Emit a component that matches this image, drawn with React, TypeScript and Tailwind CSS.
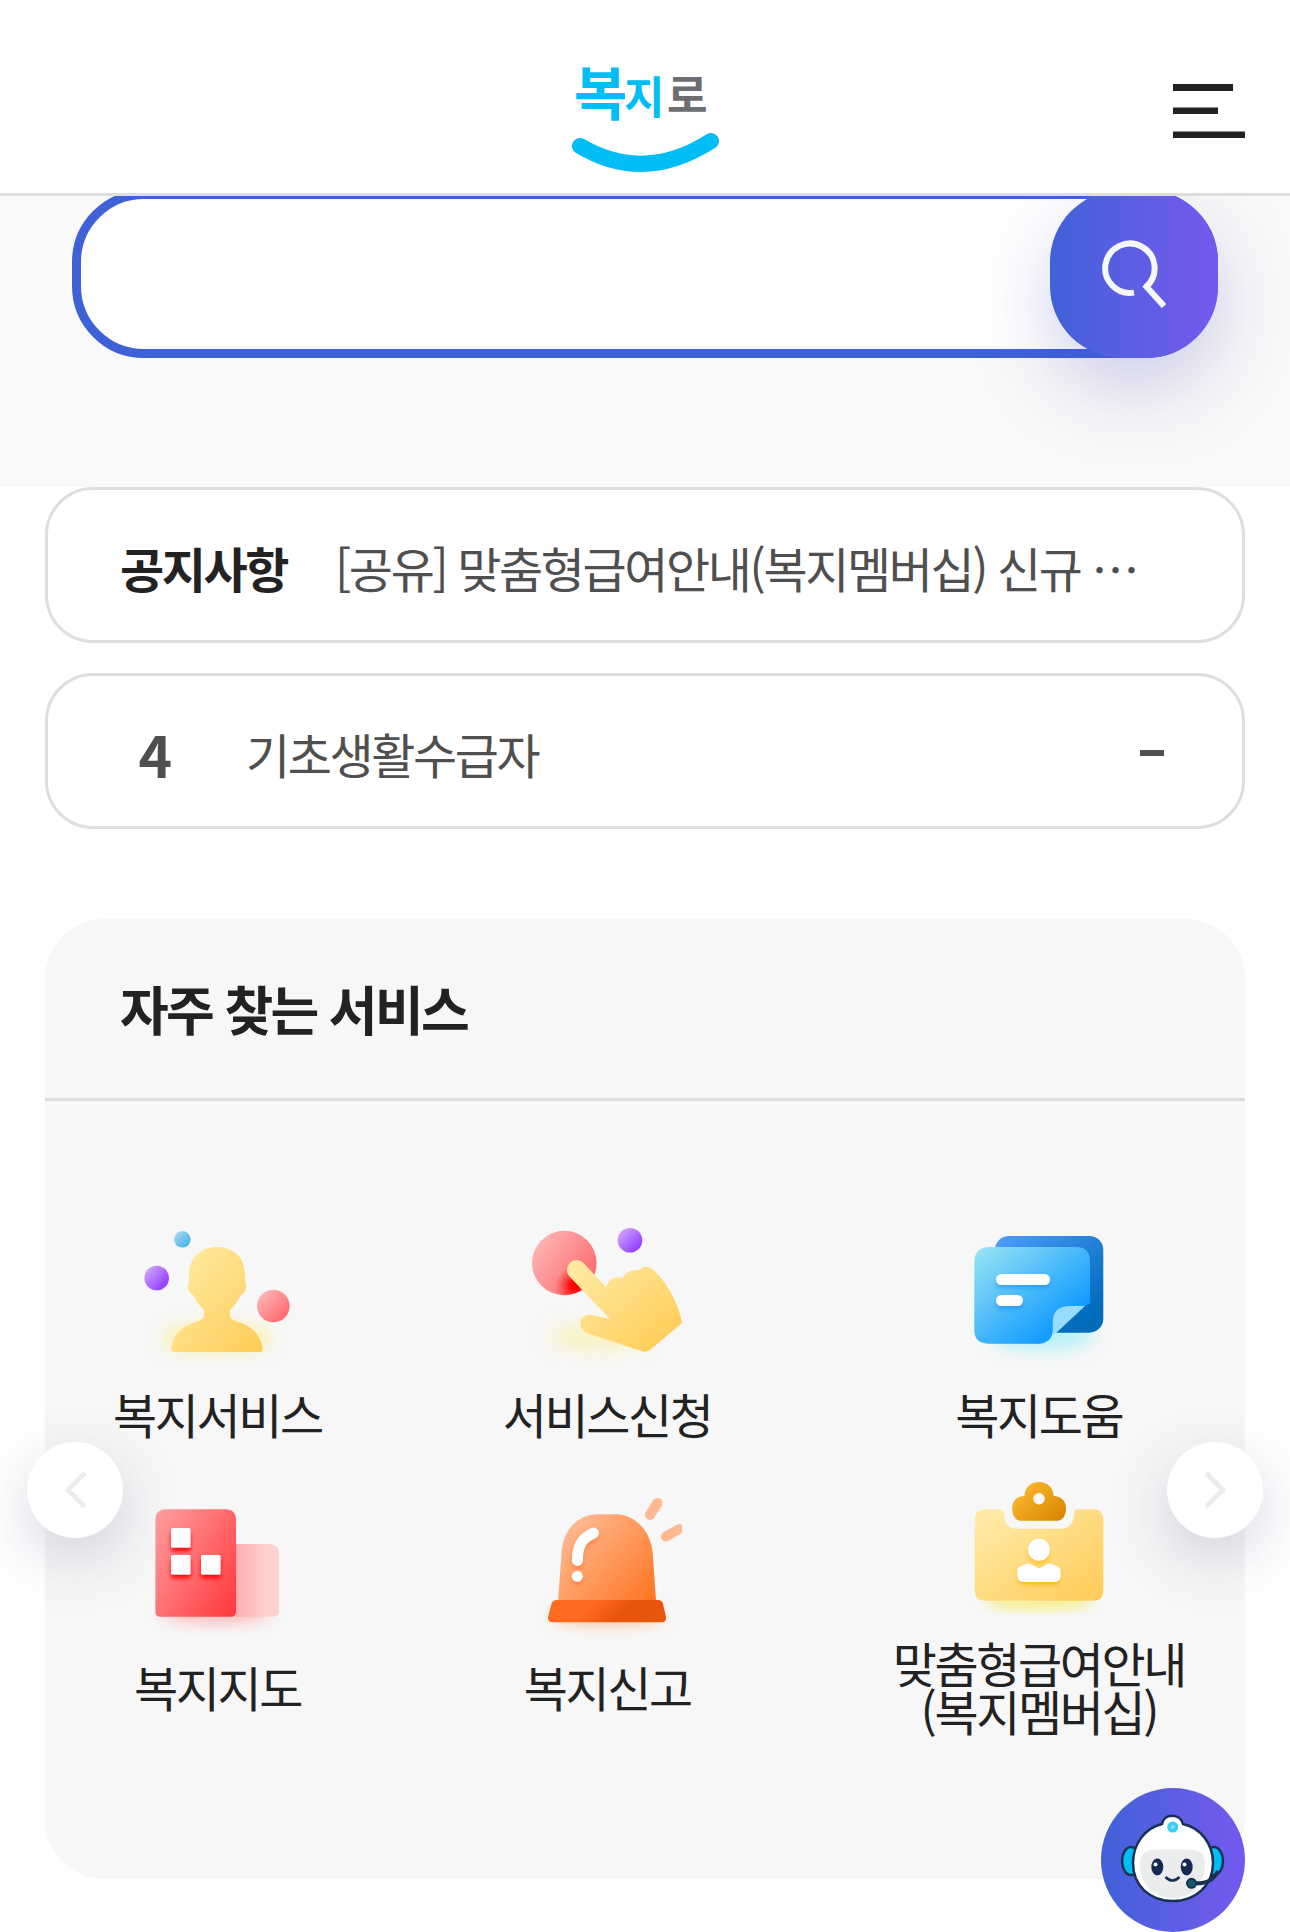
import type { ReactNode } from 'react'

interface Service {
  name: string
  detail?: string
  icon: ReactNode
}

function Logo() {
  return (
    <svg width="147" height="140" viewBox="0 -20 147 140" role="img" aria-label="복지로">
      <g className="font-bold">
        <text x="2" y="63" fontSize="58" fill="#00bdf5">복</text>
        <text x="52" y="62" fontSize="44" fill="#00bdf5">지</text>
        <text x="95" y="60" fontSize="44" fill="#6d6e71">로</text>
      </g>
      <path d="M8 94 Q72 132 139 89" fill="none" stroke="#00bdf5" strokeWidth="16" strokeLinecap="round" />
    </svg>
  )
}

function MenuIcon() {
  return (
    <svg width="72" height="54" viewBox="0 0 72 54" fill="#222" aria-hidden="true">
      <rect width="60" height="7" />
      <rect y="23.500" width="45" height="6.500" />
      <rect y="47.500" width="72" height="6.500" />
    </svg>
  )
}

function SearchIcon() {
  return (
    <svg width="64" height="68" viewBox="0 0 64 68" fill="none" stroke="#fff" strokeWidth="6" strokeOpacity="0.95" aria-hidden="true">
      <path d="M32 52.6 A24.7 24.7 0 1 1 44 47" />
      <path d="M42.5 44.5 L62 66" />
    </svg>
  )
}

function PersonIcon() {
  return (
    <svg width="150" height="150" viewBox="0 0 150 150" aria-hidden="true">
      <defs>
        <linearGradient id="person-body" x1="0" y1="0" x2="1" y2="1">
          <stop offset="0.1" stopColor="#ffe9a0" />
          <stop offset="1" stopColor="#ffcc55" />
        </linearGradient>
        <linearGradient id="person-blue" x1="0" y1="0" x2="1" y2="1">
          <stop offset="0" stopColor="#b5ddf9" />
          <stop offset="1" stopColor="#35aede" />
        </linearGradient>
        <linearGradient id="purple-dot" x1="0" y1="0" x2="1" y2="1">
          <stop offset="0.1" stopColor="#cfa5ff" />
          <stop offset="0.9" stopColor="#8f35ff" />
        </linearGradient>
        <linearGradient id="person-pink" x1="0" y1="0" x2="1" y2="1">
          <stop offset="0" stopColor="#ffc0c0" />
          <stop offset="1" stopColor="#ff5a5f" />
        </linearGradient>
        <filter id="person-blur" x="-50%" y="-50%" width="200%" height="200%">
          <feGaussianBlur stdDeviation="8" />
        </filter>
      </defs>
      <ellipse cx="75" cy="123" rx="56" ry="16" fill="#faf0a0" opacity="0.75" filter="url(#person-blur)" />
      <circle cx="40.3" cy="24.3" r="8.3" fill="url(#person-blue)" />
      <circle cx="14.7" cy="63" r="12.3" fill="url(#purple-dot)" />
      <circle cx="131.3" cy="91" r="16.3" fill="url(#person-pink)" />
      <path
        d="M29.3 134 Q29 137 32 137 H118 Q121 137 120.7 134 C119 120 110 112 99 108 Q88 104 88 102 V95 C93 90 96 86 98 81 Q104 77 104 73 Q104.500 69 103 67 V60 C103 43 92 32 75 32 C58 32 47 43 47 60 V67 Q45.500 69 46 73 Q46 77 52 81 C54 86 57 90 62 95 V102 Q62 104 51 108 C40 112 31 120 29.300 134 Z"
        fill="url(#person-body)"
      />
    </svg>
  )
}

function TouchIcon() {
  return (
    <svg width="150" height="150" viewBox="0 0 150 150" aria-hidden="true">
      <defs>
        <linearGradient id="touch-hand" x1="0.1" y1="0.1" x2="1" y2="0.9">
          <stop offset="0" stopColor="#ffe9a0" />
          <stop offset="1" stopColor="#ffcb52" />
        </linearGradient>
        <linearGradient id="touch-target" x1="0" y1="0.1" x2="1" y2="0.8">
          <stop offset="0" stopColor="#ffbcbc" />
          <stop offset="1" stopColor="#fb6468" />
        </linearGradient>
        <linearGradient id="touch-dot" x1="0" y1="0" x2="1" y2="1">
          <stop offset="0.1" stopColor="#cfa5ff" />
          <stop offset="0.9" stopColor="#8f35ff" />
        </linearGradient>
        <radialGradient id="touch-press" gradientUnits="userSpaceOnUse" cx="43" cy="71" r="20">
          <stop offset="0.2" stopColor="#ff0000" />
          <stop offset="1" stopColor="#ff3030" stopOpacity="0" />
        </radialGradient>
        <filter id="touch-blur" x="-50%" y="-80%" width="200%" height="260%">
          <feGaussianBlur stdDeviation="9" />
        </filter>
      </defs>
      <ellipse cx="66" cy="122" rx="48" ry="13" fill="#faf0a8" opacity="0.7" filter="url(#touch-blur)" />
      <circle cx="32.3" cy="48" r="32.3" fill="url(#touch-target)" />
      <circle cx="32.3" cy="48" r="32.3" fill="url(#touch-press)" />
      <circle cx="98" cy="25.3" r="12.3" fill="url(#touch-dot)" />
      <path
        d="M51.5 48 C44 41 35 47 35 56 Q35 59 38 62 L78 104 L59 100 C47 98 45 114 55 118 L109 136 Q114 138 118 135 L150 108 C148 95 141 80 133 68 Q128 61 121.5 55 Q114 48 107 55 Q96 54 90 63 Q78 60 74 72 Z"
        fill="url(#touch-hand)"
      />
    </svg>
  )
}

function DocumentIcon() {
  return (
    <svg width="150" height="150" viewBox="0 0 150 150" aria-hidden="true">
      <defs>
        <linearGradient id="doc-back" x1="0" y1="0" x2="1" y2="1">
          <stop offset="0.05" stopColor="#4b9afb" />
          <stop offset="0.85" stopColor="#006cba" />
        </linearGradient>
        <linearGradient id="doc-front" x1="0" y1="0" x2="0.9" y2="0.9">
          <stop offset="0.02" stopColor="#98e4f3" />
          <stop offset="0.85" stopColor="#149dff" />
        </linearGradient>
        <filter id="doc-blur" x="-50%" y="-80%" width="200%" height="260%">
          <feGaussianBlur stdDeviation="8" />
        </filter>
        <filter id="doc-line" x="-20%" y="-50%" width="140%" height="220%">
          <feDropShadow dx="0" dy="3" stdDeviation="2" floodColor="#0b82e8" floodOpacity="0.5" />
        </filter>
      </defs>
      <ellipse cx="78" cy="121" rx="52" ry="14" fill="#a5f0f8" opacity="0.8" filter="url(#doc-blur)" />
      <rect x="31" y="21" width="108.300" height="96.700" rx="14" fill="url(#doc-back)" />
      <path d="M24 32 H112 Q126 32 126 46 V88 L121 91 H104 Q88.700 92 88.700 107 V116 Q88 127 76 128.700 H24 Q10.300 128 10.300 115 V46 Q11 33 24 32 Z" fill="url(#doc-front)" />
      <path d="M121 91 H104 Q88.700 92 88.700 107 V119 H91 Z" fill="#97dcfc" />
      <g fill="#fff" filter="url(#doc-line)">
        <rect x="32" y="59" width="54" height="11" rx="5.500" />
        <rect x="32" y="80" width="27" height="11" rx="5.500" />
      </g>
    </svg>
  )
}

function BuildingIcon() {
  return (
    <svg width="150" height="150" viewBox="0 0 150 150" aria-hidden="true">
      <defs>
        <linearGradient id="building-front" x1="0" y1="0.1" x2="1" y2="0.9">
          <stop offset="0" stopColor="#ff9c9c" />
          <stop offset="1" stopColor="#ff3b40" />
        </linearGradient>
        <linearGradient id="building-back" x1="0" y1="0" x2="1" y2="0">
          <stop offset="0" stopColor="#ffacae" />
          <stop offset="0.7" stopColor="#ffd0d0" />
        </linearGradient>
        <filter id="building-blur" x="-50%" y="-100%" width="200%" height="300%">
          <feGaussianBlur stdDeviation="7" />
        </filter>
        <filter id="building-window" x="-20%" y="-20%" width="140%" height="160%">
          <feDropShadow dx="0" dy="4" stdDeviation="2" floodColor="#ff0000" floodOpacity="0.9" />
        </filter>
      </defs>
      <ellipse cx="74" cy="126" rx="54" ry="10" fill="#ff9a9a" opacity="0.6" filter="url(#building-blur)" />
      <path d="M94 56 H127 Q137 56 137 66 V123 Q137 128.700 131 128.700 H94 Z" fill="url(#building-back)" />
      <path d="M24 21.300 H83 Q94 21.300 94 32 V124 Q94 128.700 89 128.700 H18 Q13.400 128.700 13.400 124 V32 Q13.400 21.300 24 21.300 Z" fill="url(#building-front)" />
      <g fill="#fff" filter="url(#building-window)">
        <rect x="29" y="40" width="19.500" height="19.500" rx="1.500" />
        <rect x="29" y="67" width="19.500" height="19.500" rx="1.500" />
        <rect x="59" y="67" width="19.500" height="19.500" rx="1.500" />
      </g>
    </svg>
  )
}

function SirenIcon() {
  return (
    <svg width="150" height="150" viewBox="0 0 150 150" aria-hidden="true">
      <defs>
        <linearGradient id="siren-dome" x1="0" y1="0.1" x2="1" y2="0.9">
          <stop offset="0.1" stopColor="#ffb88f" />
          <stop offset="1" stopColor="#ff7725" />
        </linearGradient>
        <linearGradient id="siren-base" x1="0" y1="0" x2="1" y2="0.2">
          <stop offset="0.4" stopColor="#ff6b20" />
          <stop offset="0.7" stopColor="#e8560b" />
        </linearGradient>
        <filter id="siren-blur" x="-50%" y="-100%" width="200%" height="300%">
          <feGaussianBlur stdDeviation="7" />
        </filter>
        <filter id="siren-shine" x="-40%" y="-20%" width="180%" height="150%">
          <feDropShadow dx="0" dy="3" stdDeviation="2" floodColor="#ff6a1a" floodOpacity="0.6" />
        </filter>
      </defs>
      <ellipse cx="75" cy="128" rx="56" ry="10" fill="#ffb080" opacity="0.65" filter="url(#siren-blur)" />
      <path d="M26 113 L29.500 66 C30 42 46 26.300 66 26.300 H84 C105 27 120 45 121 68 L124 113 Z" fill="url(#siren-dome)" />
      <path d="M25 112 H126 Q130 112 131 116 L134 129 Q134.500 134.300 130 134.300 H20 Q15.500 134 16 129 L19.500 116 Q20.500 112 25 112 Z" fill="url(#siren-base)" />
      <g filter="url(#siren-shine)">
        <path d="M61.500 45 C50 50 45 58 45.500 72.500" fill="none" stroke="#fff" strokeWidth="11" strokeLinecap="round" />
        <circle cx="45.300" cy="88.300" r="5.500" fill="#fff" />
      </g>
      <g stroke="#ffb890" strokeWidth="10" strokeLinecap="round">
        <path d="M125.500 15 L118 27" />
        <path d="M147 41 L134 48.500" />
      </g>
    </svg>
  )
}

function ClipboardIcon() {
  return (
    <svg width="150" height="150" viewBox="0 0 150 150" aria-hidden="true">
      <defs>
        <linearGradient id="clip-board" x1="0" y1="0" x2="1" y2="1">
          <stop offset="0.1" stopColor="#ffe9a5" />
          <stop offset="1" stopColor="#ffcb55" />
        </linearGradient>
        <linearGradient id="clip-top" x1="0" y1="0.1" x2="1" y2="0.9">
          <stop offset="0.1" stopColor="#f9b82e" />
          <stop offset="1" stopColor="#d88400" />
        </linearGradient>
        <filter id="clip-blur" x="-50%" y="-100%" width="200%" height="300%">
          <feGaussianBlur stdDeviation="6" />
        </filter>
        <filter id="clip-person" x="-30%" y="-20%" width="160%" height="160%">
          <feDropShadow dx="0" dy="3" stdDeviation="2" floodColor="#ffb300" floodOpacity="0.7" />
        </filter>
      </defs>
      <ellipse cx="75" cy="137" rx="54" ry="10" fill="#f9ee80" opacity="0.8" filter="url(#clip-blur)" />
      <path d="M21 45.300 H35 Q40 45.300 40 50 C40 59 45 64.700 53 64.700 H97 C105 64.700 110 59 110 50 Q110 45.300 115 45.300 H129 Q139.300 45.300 139.300 56 V126 Q139.300 136.700 129 136.700 H21 Q10.700 136.700 10.700 126 V56 Q10.700 45.300 21 45.300 Z" fill="url(#clip-board)" />
      <path
        d="M60.300 32 C61 23 67 18 75 18 C83 18 89 23 89.700 32 C97 32 102 37 102 44 C102 51 99 56.700 93 56.700 H57 C51 56.700 48.300 51 48.300 44 C48.300 37 53 32 60.300 32 Z M75 29 A5.700 5.700 0 1 0 75 40.400 A5.700 5.700 0 1 0 75 29 Z"
        fill="url(#clip-top)"
        fillRule="evenodd"
      />
      <g fill="#fff" filter="url(#clip-person)">
        <circle cx="75" cy="85.700" r="11" />
        <path d="M65 99.300 L75 104.500 L85 99.300 L93 102 Q96.700 103.500 96.700 108 V112 Q96 118 90 118 H60 Q54 118 53.300 112 V108 Q53.300 103.500 57 102 Z" />
      </g>
    </svg>
  )
}

function BotIcon() {
  return (
    <svg width="144" height="144" viewBox="0 0 144 144" aria-hidden="true">
      <g stroke="#173153" strokeWidth="2.500">
        <ellipse cx="30" cy="73" rx="9" ry="14" fill="#00bdf5" />
        <ellipse cx="113" cy="73" rx="9" ry="14" fill="#00bdf5" />
        <path d="M61 36 C63 25 79 25 82 36 C100 40 112 56 112 75 C112 98 94 113 72 113 C49 113 32 98 32 75 C32 56 44 40 61 36 Z" fill="#fff" />
      </g>
      <path d="M39 77 C39 65 45 61.500 56 61.500 H88 C99 61.500 104 65 104 77 C104 97 91 110 72 110 C53 110 39 97 39 77 Z" fill="#ebeded" />
      <circle cx="71.700" cy="39" r="5.500" fill="#35cfff" />
      <circle cx="71.700" cy="39" r="2" fill="#8ee4ff" />
      <ellipse cx="56.300" cy="79" rx="6" ry="8.500" fill="#142a52" />
      <ellipse cx="85.700" cy="79" rx="6" ry="8.500" fill="#142a52" />
      <circle cx="54.500" cy="76.500" r="2" fill="#fff" />
      <circle cx="83.500" cy="76.500" r="2" fill="#fff" />
      <path d="M64.500 89 Q71.500 96 78.500 89" fill="none" stroke="#173153" strokeWidth="2.500" />
      <path d="M92 95.300 H100 Q112 94 117 83" fill="none" stroke="#173153" strokeWidth="4" />
      <circle cx="90.500" cy="95.300" r="4.500" fill="#145a6e" stroke="#173153" strokeWidth="2" />
    </svg>
  )
}

const services: Service[] = [
  { name: '복지서비스', icon: <PersonIcon /> },
  { name: '서비스신청', icon: <TouchIcon /> },
  { name: '복지도움', icon: <DocumentIcon /> },
  { name: '복지지도', icon: <BuildingIcon /> },
  { name: '복지신고', icon: <SirenIcon /> },
  { name: '맞춤형급여안내', detail: '(복지멤버십)', icon: <ClipboardIcon /> },
]

function Header() {
  return (
    <header className="sticky top-0 z-10 grid h-[196px] grid-cols-[1fr_auto_1fr] items-end border-b-[3px] border-[#dedede] bg-white px-[45px] pb-[21px]">
      <a href="#" className="col-start-2">
        <Logo />
      </a>
      <button type="button" aria-label="전체메뉴" className="mb-[34px] justify-self-end">
        <MenuIcon />
      </button>
    </header>
  )
}

function SearchBar() {
  return (
    <section className="bg-[#f9f9f9] px-[72px] pb-[129px]">
      <form className="relative" onSubmit={(e) => e.preventDefault()}>
        <input
          type="search"
          aria-label="통합검색"
          className="block h-[168px] w-full rounded-[72px] border-[9px] border-[#3f61d8] bg-white pr-[190px] pl-[60px] text-5xl outline-none"
        />
        <button
          type="submit"
          aria-label="검색"
          className="absolute top-0 right-0 flex size-[168px] items-center justify-center rounded-[72px] bg-linear-to-r from-[#3f61d8] to-[#7459ee] shadow-[0_30px_75px_rgba(74,70,190,0.25)]"
        >
          <SearchIcon />
        </button>
      </form>
    </section>
  )
}

function Services() {
  const arrow =
    'absolute top-1/2 flex size-24 -translate-y-1/2 items-center justify-center rounded-full bg-white shadow-[0_20px_60px_rgba(50,60,110,0.2)]'

  return (
    <section className="mt-[90px] rounded-[60px] bg-[#f7f7f7]">
      <div className="flex h-[182px] items-center border-b-[3px] border-[#dedede] px-[75px]">
        <h2 className="text-[53px] leading-none font-bold tracking-tighter">자주 찾는 서비스</h2>
      </div>
      <div className="relative pt-[114px] pr-[60px] pb-[145px] pl-[68px]">
        <ul className="grid grid-cols-[auto_auto_auto] items-center justify-between gap-y-[27px]">
          {services.map((service) => (
            <li key={service.name}>
              <a href="#" className="flex flex-col items-center gap-6 text-center text-5xl leading-none tracking-tighter">
                {service.icon}
                <span>
                  {service.name}
                  {service.detail && <span className="block">{service.detail}</span>}
                </span>
              </a>
            </li>
          ))}
        </ul>
        <button type="button" aria-label="이전" className={`${arrow} -left-[18px]`}>
          <svg width="21" height="36" viewBox="0 0 21 36" fill="none" stroke="#ececec" strokeWidth="5" aria-hidden="true">
            <path d="M20 1 L3 18 L20 35" />
          </svg>
        </button>
        <button type="button" aria-label="다음" className={`${arrow} -right-[18px]`}>
          <svg width="21" height="36" viewBox="0 0 21 36" fill="none" stroke="#ececec" strokeWidth="5" aria-hidden="true">
            <path d="M1 1 L18 18 L1 35" />
          </svg>
        </button>
      </div>
    </section>
  )
}

export default function App() {
  return (
    <div lang="ko" className="bg-white font-['Noto_Sans_CJK_KR',sans-serif] text-[#222]">
      <Header />
      <main className="-mt-[6px]">
        <SearchBar />
        <div className="px-[45px] pb-[53px]">
          <section className="flex h-[156px] items-center gap-12 rounded-[48px] border-[3px] border-[#dedede] px-[72px] pt-1 text-5xl leading-none tracking-tighter">
            <h2 className="shrink-0 font-bold">공지사항</h2>
            <a href="#" className="whitespace-nowrap text-[#4f4f4f]">
              [공유] 맞춤형급여안내(복지멤버십) 신규 …
            </a>
          </section>
          <section className="mt-[30px] flex h-[156px] items-center rounded-[48px] border-[3px] border-[#dedede] pt-1 pr-[78px] pl-[72px] text-5xl leading-none tracking-tighter text-[#4f4f4f]">
            <span className="mr-[58px] w-[68px] text-center text-[57px] font-bold">4</span>
            <a href="#" className="grow">기초생활수급자</a>
            <span role="img" aria-label="순위 변동 없음" className="h-[6px] w-6 bg-[#4f4f4f]" />
          </section>
          <Services />
        </div>
      </main>
      <button
        type="button"
        aria-label="챗봇 상담"
        className="fixed right-[45px] bottom-0 rounded-full bg-linear-to-r from-[#3f61d8] to-[#7459ee]"
      >
        <BotIcon />
      </button>
    </div>
  )
}
